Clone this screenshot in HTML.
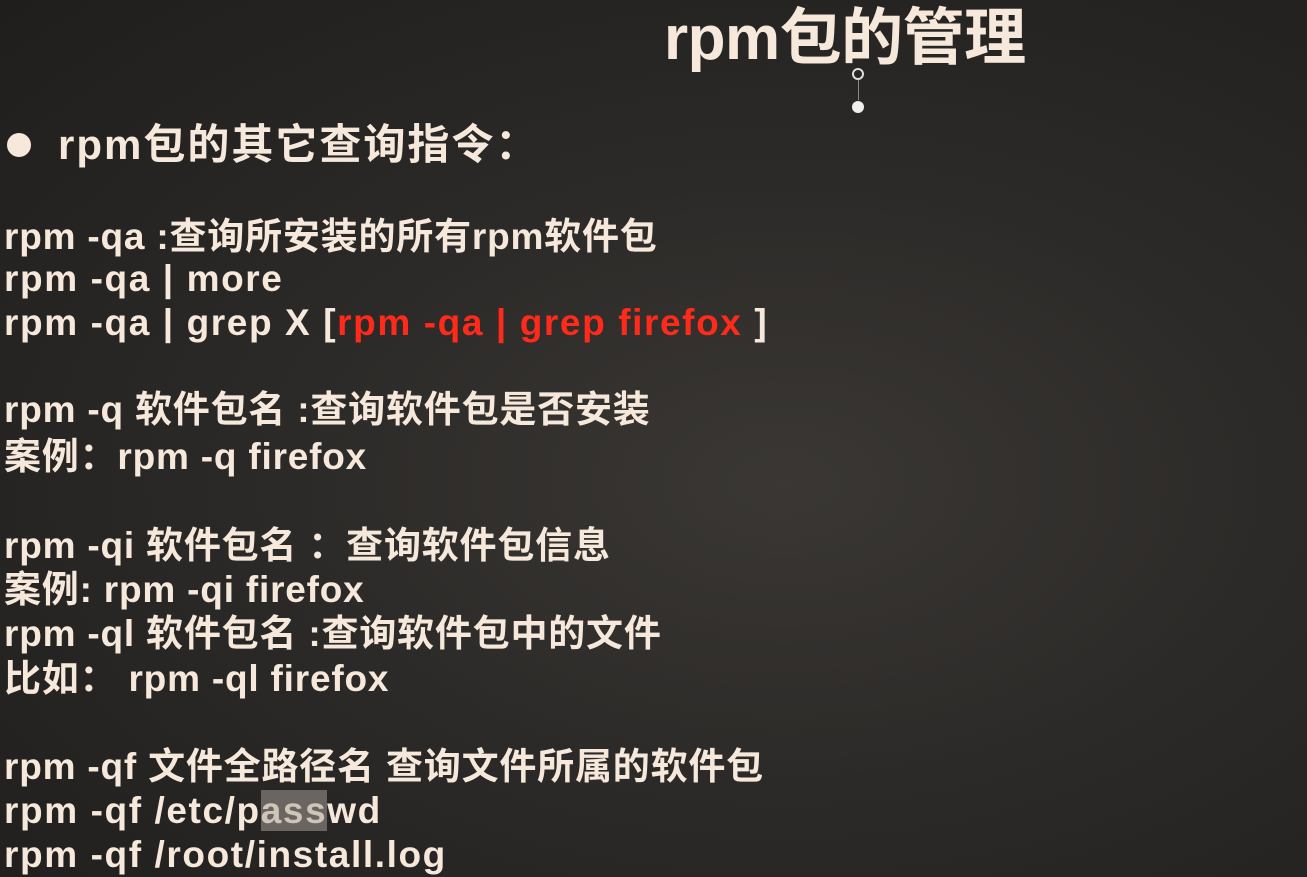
<!DOCTYPE html>
<html><head><meta charset="utf-8"><style>
html,body{margin:0;padding:0;}
body{width:1307px;height:877px;overflow:hidden;position:relative;
background:radial-gradient(ellipse at 60% 55%,#3a3734 0%,#2c2a28 45%,#1f1e1c 100%);
font-family:"Liberation Sans","Noto Sans CJK SC","WenQuanYi Zen Hei",sans-serif;font-weight:bold;color:#f6e8da;}
.l{position:absolute;left:4px;white-space:nowrap;font-size:37px;line-height:44px;letter-spacing:0.8px;}
.w{letter-spacing:1.6px;}
.r{color:#ff2a1a;}
</style></head><body>
<div style="position:absolute;left:664px;top:4px;font-size:62px;line-height:70px;white-space:nowrap;letter-spacing:-0.5px">rpm包的管理</div>
<div style="position:absolute;left:852px;top:68px;width:8px;height:8px;border:2px solid #ddd;border-radius:50%;"></div>
<div style="position:absolute;left:858px;top:80px;width:1px;height:20px;background:#888;"></div>
<div style="position:absolute;left:852px;top:101px;width:12px;height:12px;background:#eee;border-radius:50%;"></div>
<div style="position:absolute;left:7px;top:133px;width:24px;height:24px;background:#f6e8da;border-radius:50%;"></div>
<div class="l" style="left:58px;top:120px;font-size:42px;line-height:50px;letter-spacing:2px">rpm包的其它查询指令：</div>
<div class="l" style="top:215px">rpm -qa :查询所安装的所有rpm软件包</div>
<div class="l w" style="top:257px">rpm -qa | more</div>
<div class="l w" style="top:301px">rpm -qa | grep X [<span class="r">rpm -qa | grep firefox</span> ]</div>
<div class="l" style="top:388px">rpm -q 软件包名 :查询软件包是否安装</div>
<div class="l" style="top:435px">案例：rpm -q firefox</div>
<div class="l" style="top:524px">rpm -qi 软件包名 ：查询软件包信息</div>
<div class="l" style="top:568px">案例: rpm -qi firefox</div>
<div class="l" style="top:612px">rpm -ql 软件包名 :查询软件包中的文件</div>
<div class="l" style="top:657px">比如： rpm -ql firefox</div>
<div class="l" style="top:745px">rpm -qf 文件全路径名 查询文件所属的软件包</div>
<div class="l w" style="top:789px">rpm -qf /etc/p<span style="background:#6a6560;color:#cfc4b8">ass</span>wd</div>
<div class="l w" style="top:833px">rpm -qf /root/install.log</div>
</body></html>
